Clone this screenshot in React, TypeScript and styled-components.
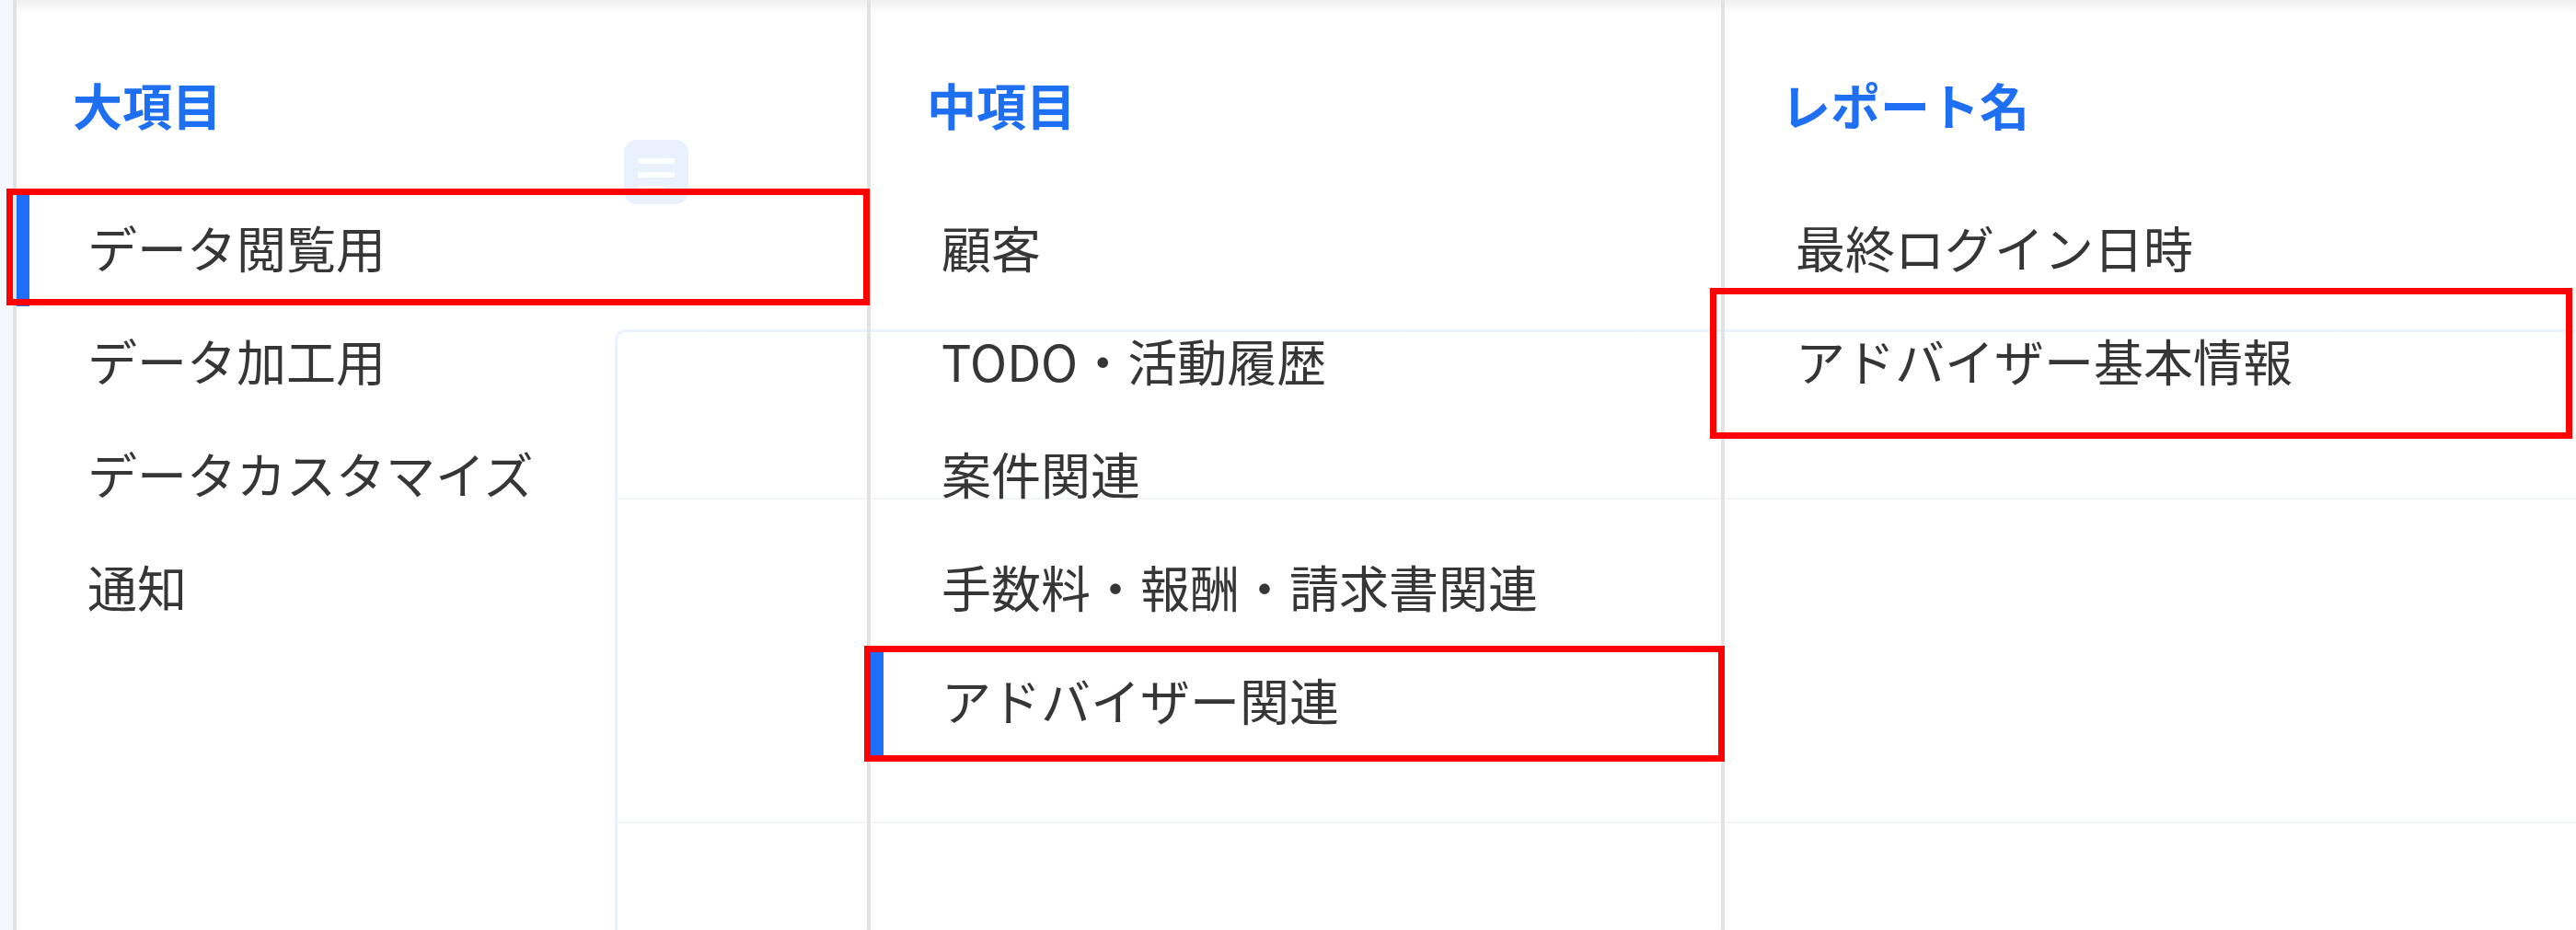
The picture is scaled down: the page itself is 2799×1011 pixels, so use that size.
import React from "react"
import styled, { createGlobalStyle } from "styled-components"

const GlobalStyle = createGlobalStyle`
  html, body {
    margin: 0;
    padding: 0;
    background: #ffffff;
  }
  body {
    width: 2799px;
    height: 1011px;
    overflow: hidden;
    font-family: "Noto Sans CJK JP", "Noto Sans", sans-serif;
  }
`

type Column = {
  title: string
  items: string[]
  active: number
}

const columns: Column[] = [
  { title: "大項目", items: ["データ閲覧用", "データ加工用", "データカスタマイズ", "通知"], active: 0 },
  {
    title: "中項目",
    items: ["顧客", "TODO・活動履歴", "案件関連", "手数料・報酬・請求書関連", "アドバイザー関連"],
    active: 4,
  },
  { title: "レポート名", items: ["最終ログイン日時", "アドバイザー基本情報"], active: -1 },
]

// red annotation frames drawn over the screenshot
const marks = [
  { left: 7, top: 205, width: 938, height: 127 },
  { left: 939, top: 702, width: 935, height: 126 },
  { left: 1858, top: 313, width: 937, height: 164 },
]

const ListIcon = () => (
  <svg width="70" height="70" viewBox="0 0 70 70">
    <rect width="70" height="70" rx="14" fill="rgb(35,115,245)" />
    <rect x="15" y="20" width="40" height="6" rx="2" fill="#fff" />
    <rect x="15" y="35" width="40" height="6" rx="2" fill="#fff" />
    <rect x="15" y="50" width="29" height="6" rx="2" fill="#fff" />
  </svg>
)

export default function App() {
  return (
    <Page>
      <GlobalStyle />
      <Backdrop>
        <SideStrip />
        <Main>
          <IconButton>
            <ListIcon />
          </IconButton>
          <Card>
            <CardRow $height={180} />
            <CardRow $height={350} />
          </Card>
        </Main>
      </Backdrop>

      <Menu>
        {columns.map(column => (
          <MenuColumn key={column.title}>
            <ColumnTitle>{column.title}</ColumnTitle>
            {column.items.map((item, i) => (
              <MenuItem key={item} $active={i === column.active}>
                {item}
              </MenuItem>
            ))}
          </MenuColumn>
        ))}
      </Menu>

      {marks.map((m, i) => (
        <Mark key={i} $left={m.left} $top={m.top} $width={m.width} $height={m.height} />
      ))}
    </Page>
  )
}

const Page = styled.div`
  position: relative;
  width: 2799px;
  height: 1011px;
  overflow: hidden;
  background: #ffffff;
`
const Backdrop = styled.div`
  display: flex;
  height: 100%;
`
const SideStrip = styled.div`
  width: 14px;
  flex-shrink: 0;
  background: #f4f7fd;
`
const Main = styled.div`
  flex: 1;
  display: flex;
  flex-direction: column;
  padding: 152px 0 0 654px;
`
const IconButton = styled.div`
  width: 70px;
  height: 70px;
  margin-left: 10px;
  svg {
    display: block;
  }
`
const Card = styled.div`
  margin-top: 136px;
  flex: 1;
  border: 3px solid rgb(60, 120, 235);
  border-right: none;
  border-bottom: none;
  border-radius: 12px 0 0 0;
  background: rgb(248, 250, 255);
`
const CardRow = styled.div<{ $height: number }>`
  height: ${props => props.$height}px;
  border-bottom: 2px solid rgb(150, 170, 170);
`
const Menu = styled.div`
  position: absolute;
  top: 0;
  left: 14px;
  right: 0;
  bottom: 0;
  display: flex;
  background: linear-gradient(to bottom, rgba(238, 238, 238, 0.9), rgba(255, 255, 255, 0.9) 14px);
`
const MenuColumn = styled.div`
  width: 928px;
  flex-shrink: 0;
  box-sizing: border-box;
  border-left: 4px solid #e2e2e2;
  display: flex;
  flex-direction: column;
`
const ColumnTitle = styled.div`
  padding: 78px 0 60px 61px;
  font-size: 54px;
  line-height: 72px;
  font-weight: 700;
  color: #1f6ff2;
`
const MenuItem = styled.div<{ $active: boolean }>`
  height: 123px;
  display: flex;
  align-items: center;
  box-sizing: border-box;
  padding: 0 0 6px 63px;
  border-left: 14px solid ${props => (props.$active ? "#1e6ef7" : "transparent")};
  font-size: 54px;
  color: #363636;
  white-space: nowrap;
`
const Mark = styled.div<{ $left: number; $top: number; $width: number; $height: number }>`
  position: absolute;
  left: ${props => props.$left}px;
  top: ${props => props.$top}px;
  width: ${props => props.$width}px;
  height: ${props => props.$height}px;
  box-sizing: border-box;
  border: 7px solid #ff0000;
  pointer-events: none;
`
